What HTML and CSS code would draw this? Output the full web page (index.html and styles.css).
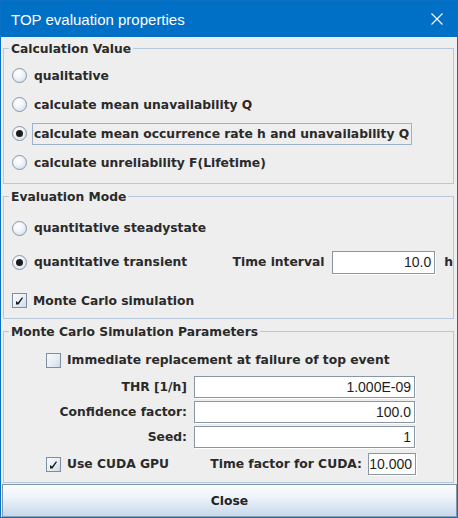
FILE: index.html
```html
<!DOCTYPE html>
<html lang="en">
<head>
<meta charset="utf-8">
<title>TOP evaluation properties</title>
<link rel="stylesheet" href="styles.css">
</head>
<body>
<div class="window">
  <header class="titlebar">
    <span class="title">TOP evaluation properties</span>
    <svg class="close-x" width="12" height="12" viewBox="0 0 12 12"><path d="M0.5 0.5 L11.5 11.5 M11.5 0.5 L0.5 11.5" stroke="#fff" stroke-width="1.1" fill="none"/></svg>
  </header>
  <main class="content">
    <fieldset class="panel panel-calc">
      <legend>Calculation Value</legend>
      <div class="row row-29"><span class="radio"></span><span class="lbl">qualitative</span></div>
      <div class="row row-29"><span class="radio"></span><span class="lbl">calculate mean unavailability Q</span></div>
      <div class="row row-29"><span class="radio checked"></span><span class="lbl focus">calculate mean occurrence rate h and unavailability Q</span></div>
      <div class="row row-29"><span class="radio"></span><span class="lbl">calculate unreliability F(Lifetime)</span></div>
    </fieldset>

    <fieldset class="panel panel-mode">
      <legend>Evaluation Mode</legend>
      <div class="row row-30"><span class="radio"></span><span class="lbl">quantitative steadystate</span></div>
      <div class="row row-38">
        <div class="radio-group"><span class="radio checked"></span><span class="lbl">quantitative transient</span></div>
        <span class="txt">Time interval</span>
        <span class="field field-interval">10.0</span>
        <span class="txt unit">h</span>
      </div>
      <div class="row row-mc"><span class="check checked"><svg width="13" height="13" viewBox="0 0 13 13"><path d="M3 7 L3 10.5 L5.5 10.5 L10 4 L9 3.2 L5 8.5 Z" fill="#1a1a1a"/></svg></span><span class="txt">Monte Carlo simulation</span></div>
    </fieldset>

    <fieldset class="panel panel-mc">
      <legend>Monte Carlo Simulation Parameters</legend>
      <div class="row row-28 indent"><span class="check"></span><span class="txt">Immediate replacement at failure of top event</span></div>
      <div class="param-grid">
        <span class="plabel">THR [1/h]</span><span class="field">1.000E-09</span>
        <span class="plabel">Confidence factor:</span><span class="field">100.0</span>
        <span class="plabel">Seed:</span><span class="field">1</span>
      </div>
      <div class="row row-cuda indent">
        <span class="check checked"><svg width="13" height="13" viewBox="0 0 13 13"><path d="M3 7 L3 10.5 L5.5 10.5 L10 4 L9 3.2 L5 8.5 Z" fill="#1a1a1a"/></svg></span><span class="txt">Use CUDA GPU</span>
        <div class="cuda-factor">
          <span class="txt">Time factor for CUDA:</span>
          <span class="field field-cuda">10.000</span>
        </div>
      </div>
    </fieldset>
  </main>
  <button class="close-btn" type="button">Close</button>
</div>
</body>
</html>
```

FILE: styles.css
```css
html, body {
  margin: 0;
  padding: 0;
  background: #eeeeee;
}

.window {
  width: 458px;
  height: 518px;
  box-sizing: border-box;
  border: 1px solid #0a70c4;
  background: #eeeeee;
  display: flex;
  flex-direction: column;
  font-family: "DejaVu Sans", sans-serif;
  font-weight: bold;
  font-size: 12.3px;
  letter-spacing: 0;
  color: #2a2a2a;
}

.titlebar {
  height: 36px;
  flex: 0 0 36px;
  background: #0070c6;
  display: flex;
  align-items: center;
  justify-content: space-between;
  padding: 0 14px 0 10px;
}

.title {
  font-family: "Liberation Sans", Arial, sans-serif;
  font-weight: normal;
  font-size: 15px;
  letter-spacing: 0;
  color: #ffffff;
}

.close-x {
  display: block;
}

.content {
  flex: 1;
  padding: 3px 3px 0 2px;
  display: flex;
  flex-direction: column;
}

.panel {
  margin: 0;
  padding: 0;
  border: 1px solid #b6c8da;
  min-width: 0;
}

.panel legend {
  margin-left: 5px;
  padding: 1px 2px 0 2px;
  line-height: 16px;
  color: #2a2a2a;
}

.panel-calc {
  padding-top: 4px;
  padding-bottom: 6px;
}

.panel-mode {
  margin-top: 4px;
  padding-top: 8px;
  padding-bottom: 1px;
}

.panel-mc {
  margin-top: 4px;
  padding-top: 6px;
  padding-bottom: 6px;
}

.row {
  display: flex;
  align-items: center;
  padding-left: 8px;
}

.row-28 { height: 28px; }
.row-29 { height: 29px; }
.row-30 { height: 30px; }
.row-38 { height: 38px; }

.row-mc {
  padding-top: 3px;
  height: 33px;
}

.row.indent {
  padding-left: 42px;
}

.row-cuda {
  height: 24px;
  margin-top: 4px;
  padding-right: 37px;
}

.radio-group {
  width: 221px;
  display: flex;
  align-items: center;
}

.radio {
  flex: 0 0 auto;
  width: 15px;
  height: 15px;
  box-sizing: border-box;
  border-radius: 50%;
  border: 1px solid #8797aa;
  background: radial-gradient(circle at 40% 35%, #ffffff 0%, #f2f5f9 40%, #ccd8e5 100%);
  margin-right: 5px;
  position: relative;
}

.radio.checked::after {
  content: "";
  position: absolute;
  left: 3px;
  top: 3px;
  width: 7px;
  height: 7px;
  border-radius: 50%;
  background: #1c1c1c;
}

.lbl {
  border: 1px solid transparent;
  padding: 1px 2px 1px 1px;
  line-height: 18px;
}

.lbl.focus {
  border-color: #9cb2ca;
}

.check {
  flex: 0 0 auto;
  width: 15px;
  height: 15px;
  box-sizing: border-box;
  border: 1px solid #7d8ea2;
  background: linear-gradient(135deg, #f8fafd 0%, #e9eff6 50%, #cfdbe8 100%);
  margin-right: 6px;
  display: flex;
  align-items: center;
  justify-content: center;
}

.check svg {
  display: block;
}

.txt {
  line-height: 18px;
  white-space: nowrap;
}

.unit {
  margin-left: 9px;
}

.field {
  display: block;
  box-sizing: border-box;
  height: 22px;
  background: #ffffff;
  border: 1px solid #8996a3;
  box-shadow: 1px 1px 0 #ffffff;
  text-align: right;
  padding-right: 3px;
  font-family: "Liberation Sans", Arial, sans-serif;
  font-weight: normal;
  font-size: 14px;
  letter-spacing: 0;
  line-height: 20px;
  color: #1e1e1e;
}

.field-interval {
  width: 103px;
  height: 23px;
  margin-left: 8px;
  line-height: 21px;
}

.param-grid {
  margin-top: 2px;
  display: grid;
  grid-template-columns: 183px 221px;
  grid-auto-rows: 22px;
  column-gap: 7px;
  row-gap: 3px;
  align-items: center;
}

.plabel {
  text-align: right;
  line-height: 18px;
}

.cuda-factor {
  margin-left: auto;
  display: flex;
  align-items: center;
}

.field-cuda {
  width: 48px;
  margin-left: 6px;
}

.close-btn {
  flex: 0 0 33px;
  height: 33px;
  margin: 0 0 0 1px;
  box-sizing: border-box;
  border: 1px solid #8195aa;
  border-bottom-color: #8aa0b6;
  background: linear-gradient(#fafcfe 0%, #f0f5fa 35%, #dbe6f2 70%, #c7d8ea 100%);
  font-family: "DejaVu Sans", sans-serif;
  font-weight: bold;
  font-size: 12.3px;
  color: #222222;
  padding: 0;
}
```
